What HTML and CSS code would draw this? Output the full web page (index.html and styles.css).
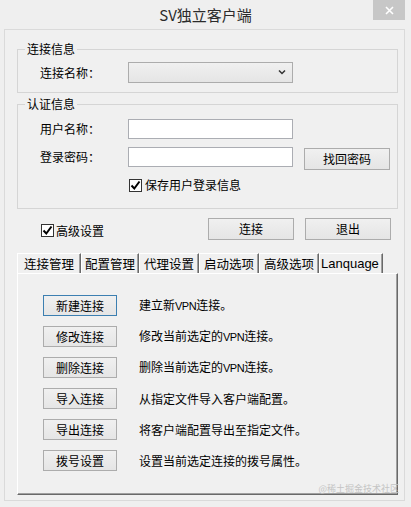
FILE: index.html
```html
<!DOCTYPE html>
<html lang="zh-CN">
<head>
<meta charset="UTF-8">
<meta name="viewport" content="width=device-width, initial-scale=1.0">
<title>SV独立客户端</title>
<link rel="stylesheet" href="styles.css">
</head>
<body>

<div class="titlebar">
  <h1 class="title">SV独立客户端</h1>
  <button class="close" aria-label="关闭">
    <svg width="9" height="9" viewBox="0 0 9 9"><path d="M1 1L8 8M8 1L1 8" stroke="#fff" stroke-width="1.6" fill="none"/></svg>
  </button>
</div>

<div class="client">
  <fieldset class="group">
    <legend>连接信息</legend>
    <div class="group-body group-body-conn">
      <div class="field-row">
        <label class="field-label">连接名称：</label>
        <div class="combo">
          <svg width="8" height="5" viewBox="0 0 8 5"><path d="M1 0.5L4 3.5L7 0.5" stroke="#333" stroke-width="1.5" fill="none"/></svg>
        </div>
      </div>
    </div>
  </fieldset>

  <fieldset class="group group-auth">
    <legend>认证信息</legend>
    <div class="group-body group-body-auth">
      <div class="field-row">
        <label class="field-label">用户名称：</label>
        <input class="edit" type="text">
      </div>
      <div class="field-row field-row-pass">
        <label class="field-label">登录密码：</label>
        <input class="edit" type="password">
        <button class="btn btn-find">找回密码</button>
      </div>
      <div class="check-row">
        <span class="check"><svg width="11" height="11" viewBox="0 0 11 11"><path d="M1.5 5.5L4.3 8.5L9.5 1.5" stroke="#000" stroke-width="2" fill="none"/></svg></span>
        <span>保存用户登录信息</span>
      </div>
    </div>
  </fieldset>

  <div class="action-row">
    <div class="adv-check">
      <span class="check"><svg width="11" height="11" viewBox="0 0 11 11"><path d="M1.5 5.5L4.3 8.5L9.5 1.5" stroke="#000" stroke-width="2" fill="none"/></svg></span>
      <span>高级设置</span>
    </div>
    <button class="btn btn-main">连接</button>
    <button class="btn btn-main">退出</button>
  </div>

  <div class="tabs">
    <div class="tab tab-w64">连接管理</div>
    <div class="tab tab-w58">配置管理</div>
    <div class="tab tab-w60">代理设置</div>
    <div class="tab tab-w60">启动选项</div>
    <div class="tab tab-w60">高级选项</div>
    <div class="tab tab-w64 tab-latin">Lanquage</div>
  </div>

  <div class="panel">
    <div class="cmd-row">
      <button class="btn btn-cmd btn-focus">新建连接</button>
      <span class="cmd-desc">建立新<span class="latin">VPN</span>连接。</span>
    </div>
    <div class="cmd-row">
      <button class="btn btn-cmd">修改连接</button>
      <span class="cmd-desc">修改当前选定的<span class="latin">VPN</span>连接。</span>
    </div>
    <div class="cmd-row">
      <button class="btn btn-cmd">删除连接</button>
      <span class="cmd-desc">删除当前选定的<span class="latin">VPN</span>连接。</span>
    </div>
    <div class="cmd-row">
      <button class="btn btn-cmd">导入连接</button>
      <span class="cmd-desc">从指定文件导入客户端配置。</span>
    </div>
    <div class="cmd-row">
      <button class="btn btn-cmd">导出连接</button>
      <span class="cmd-desc">将客户端配置导出至指定文件。</span>
    </div>
    <div class="cmd-row">
      <button class="btn btn-cmd">拨号设置</button>
      <span class="cmd-desc">设置当前选定连接的拨号属性。</span>
    </div>
  </div>

  <!-- 截图水印 -->
  <span class="watermark">@稀土掘金技术社区</span>
</div>

</body>
</html>
```

FILE: styles.css
```css
* {
  box-sizing: border-box;
  margin: 0;
  padding: 0;
}

body {
  font-family: "Noto Sans CJK SC", "Liberation Sans", sans-serif;
  font-size: 12px;
  color: #000;
  background-color: #efefef;
  width: 411px;
  height: 507px;
  overflow: hidden;
}

/* 标题栏 */
.titlebar {
  display: grid;
  grid-template-columns: 1fr auto 1fr;
  height: 29px;
}

.title {
  grid-column: 2;
  font-size: 15px;
  font-weight: normal;
  line-height: 30px;
  color: #2b2b2b;
}

.close {
  grid-column: 3;
  justify-self: end;
  align-self: start;
  width: 32px;
  height: 20px;
  margin-right: 6px;
  border: none;
  background-color: #c7c7c7;
  display: flex;
  align-items: center;
  justify-content: center;
}

/* 客户区 */
.client {
  position: relative;
  height: 472px;
  margin: 0 6px 0 4px;
  padding: 11px 6px 0 12px;
  border: 1px solid #dadada;
  background-color: #f0f0f0;
}

.group {
  border: 1px solid #d5d5d5;
}

.group legend {
  margin-left: 7px;
  padding: 0 2px;
  font-size: 12px;
  line-height: 16px;
}

.group-auth {
  margin-top: 3px;
}

.group-body {
  padding-left: 22px;
}

.group-body-conn {
  padding-top: 5px;
  padding-bottom: 9px;
}

.group-body-auth {
  padding-top: 7px;
  padding-bottom: 15px;
  display: flex;
  flex-direction: column;
  gap: 8px;
}

.field-row {
  display: flex;
  align-items: center;
  height: 20px;
}

.group-body-conn .field-row {
  height: 21px;
}

.field-row-pass {
  align-items: flex-start;
  height: 23px;
}

.field-row-pass .field-label {
  line-height: 20px;
}

.field-label {
  width: 88px;
  line-height: 16px;
}

.combo {
  width: 165px;
  height: 21px;
  border: 1px solid #acacac;
  background: linear-gradient(#f0f0f0, #e5e5e5);
  display: flex;
  align-items: center;
  justify-content: flex-end;
  padding-right: 6px;
}

.edit {
  width: 165px;
  height: 20px;
  border: 1px solid #abadb3;
  background-color: #fff;
  outline: none;
}

.btn {
  font-family: "Noto Sans CJK SC", "Liberation Sans", sans-serif;
  font-size: 12px;
  line-height: 18px;
  color: #000;
  border: 1px solid #acacac;
  background: linear-gradient(#f0f0f0, #e5e5e5);
}

.btn-find {
  width: 86px;
  height: 22px;
  margin-left: 11px;
  margin-top: 1px;
}

.check-row {
  display: flex;
  align-items: center;
  gap: 3px;
  height: 16px;
  margin-top: -1px;
  margin-left: 89px;
  line-height: 16px;
}

.check {
  width: 13px;
  height: 13px;
  border: 1px solid #333;
  background-color: #fff;
  display: flex;
  align-items: center;
  justify-content: center;
}

/* 高级设置 + 连接/退出 */
.action-row {
  display: flex;
  align-items: center;
  gap: 11px;
  height: 22px;
  margin-top: 9px;
  padding: 0 7px 0 24px;
}

.adv-check {
  display: flex;
  align-items: center;
  gap: 2px;
  margin-top: 3px;
  margin-right: auto;
  line-height: 16px;
}

.btn-main {
  width: 86px;
  height: 22px;
}

/* 选项卡 */
.tabs {
  display: flex;
  height: 20px;
  margin-top: 13px;
}

.tab {
  height: 20px;
  border-top: 1px solid #fff;
  border-left: 1px solid #fff;
  border-right: 1px solid #696969;
  box-shadow: inset -1px 0 #a0a0a0;
  text-align: center;
  font-size: 12.5px;
  line-height: 19px;
}

.tab-w64 { width: 64px; }
.tab-w60 { width: 60px; }
.tab-w58 { width: 58px; }

.tab-latin {
  font-family: "Liberation Sans", sans-serif;
  font-size: 13px;
  text-align: left;
  padding-left: 1px;
}

.panel {
  height: 222px;
  border-top: 1px solid #fff;
  border-left: 1px solid #fff;
  border-right: 1px solid #696969;
  border-bottom: 1px solid #696969;
  box-shadow: inset -1px -1px #a0a0a0;
  padding: 21px 0 0 25px;
  display: flex;
  flex-direction: column;
  gap: 10px;
}

.cmd-row {
  display: flex;
  align-items: center;
  gap: 22px;
  height: 21px;
}

.btn-cmd {
  width: 74px;
  height: 21px;
}

.btn-focus {
  border-color: #3c7fb1;
}

.cmd-desc {
  line-height: 16px;
}

.latin {
  font-family: "Liberation Sans", sans-serif;
  font-size: 11px;
  letter-spacing: -0.5px;
}

.watermark {
  position: absolute;
  right: 5px;
  bottom: 6px;
  font-size: 9px;
  line-height: 11px;
  color: #c4c4c4;
}
```
